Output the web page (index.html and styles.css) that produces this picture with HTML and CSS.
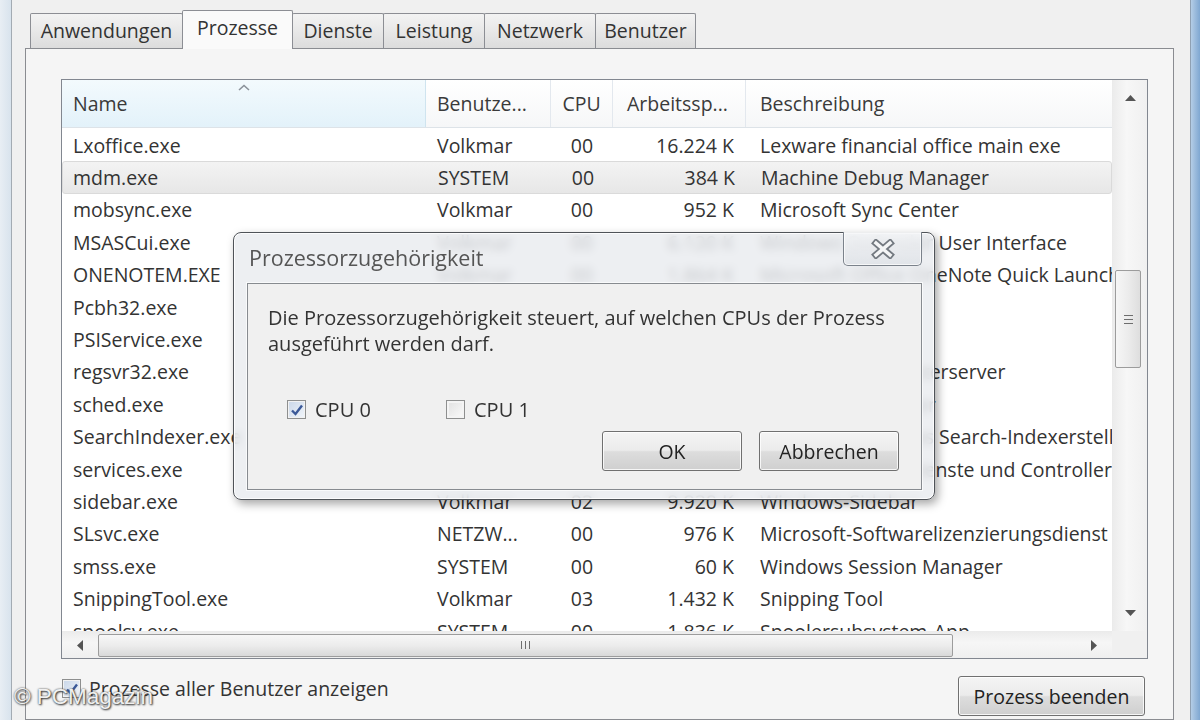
FILE: index.html
```html
<!DOCTYPE html>
<html lang="de">
<head>
    <meta charset="UTF-8">
    <title>Task-Manager - Prozesse</title>
    <link rel="stylesheet" href="styles.css">
</head>
<body>
    <div class="window">
        <div class="frame-left"></div>
        <div class="client">
            <div class="tabs">
                <div class="tab tab-anw">Anwendungen</div>
                <div class="tab tab-proz active">Prozesse</div>
                <div class="tab tab-dien">Dienste</div>
                <div class="tab tab-leis">Leistung</div>
                <div class="tab tab-netz">Netzwerk</div>
                <div class="tab tab-benu">Benutzer</div>
            </div>

            <div class="panel">
                <div class="listview">
                    <div class="table">
                        <div class="header">
                            <div class="hcell sorted">Name
                                <svg class="sort-arrow" width="12" height="7" viewBox="0 0 12 7"><path d="M1 6 L6 1.5 L11 6" fill="none" stroke="#8a9199" stroke-width="1.6"/></svg>
                            </div>
                            <div class="hcell">Benutze...</div>
                            <div class="hcell center">CPU</div>
                            <div class="hcell">Arbeitssp...</div>
                            <div class="hcell desc">Beschreibung</div>
                        </div>
                        <div class="rows">
                            <div class="row"><span>Lxoffice.exe</span><span>Volkmar</span><span class="center">00</span><span class="num">16.224 K</span><span class="desc">Lexware financial office main exe</span></div>
                            <div class="row hot"><span>mdm.exe</span><span>SYSTEM</span><span class="center">00</span><span class="num">384 K</span><span class="desc">Machine Debug Manager</span></div>
                            <div class="row"><span>mobsync.exe</span><span>Volkmar</span><span class="center">00</span><span class="num">952 K</span><span class="desc">Microsoft Sync Center</span></div>
                            <div class="row"><span>MSASCui.exe</span><span>Volkmar</span><span class="center">00</span><span class="num">6.120 K</span><span class="desc">Windows Defender User Interface</span></div>
                            <div class="row"><span>ONENOTEM.EXE</span><span>Volkmar</span><span class="center">00</span><span class="num">1.864 K</span><span class="desc">Microsoft Office OneNote Quick Launcher</span></div>
                            <div class="row"><span>Pcbh32.exe</span><span>Volkmar</span><span class="center">00</span><span class="num">2.404 K</span><span class="desc">Pcbh32 Helper</span></div>
                            <div class="row"><span>PSIService.exe</span><span>SYSTEM</span><span class="center">00</span><span class="num">1.140 K</span><span class="desc">PSIService</span></div>
                            <div class="row"><span>regsvr32.exe</span><span>Volkmar</span><span class="center">00</span><span class="num">1.852 K</span><span class="desc">Microsoft(C) Registerserver</span></div>
                            <div class="row"><span>sched.exe</span><span>SYSTEM</span><span class="center">00</span><span class="num">2.160 K</span><span class="desc">Antivirus Scheduler</span></div>
                            <div class="row"><span>SearchIndexer.exe</span><span>SYSTEM</span><span class="center">00</span><span class="num">11.372 K</span><span class="desc">Microsoft Windows Search-Indexerstellungsprogramm</span></div>
                            <div class="row"><span>services.exe</span><span>SYSTEM</span><span class="center">00</span><span class="num">3.668 K</span><span class="desc">Anwendung für Dienste und Controller</span></div>
                            <div class="row"><span>sidebar.exe</span><span>Volkmar</span><span class="center">02</span><span class="num">9.920 K</span><span class="desc">Windows-Sidebar</span></div>
                            <div class="row"><span>SLsvc.exe</span><span>NETZW...</span><span class="center">00</span><span class="num">976 K</span><span class="desc">Microsoft-Softwarelizenzierungsdienst</span></div>
                            <div class="row"><span>smss.exe</span><span>SYSTEM</span><span class="center">00</span><span class="num">60 K</span><span class="desc">Windows Session Manager</span></div>
                            <div class="row"><span>SnippingTool.exe</span><span>Volkmar</span><span class="center">03</span><span class="num">1.432 K</span><span class="desc">Snipping Tool</span></div>
                            <div class="row"><span>spoolsv.exe</span><span>SYSTEM</span><span class="center">00</span><span class="num">1.836 K</span><span class="desc">Spoolersubsystem-App</span></div>
                        </div>
                    </div>

                    <div class="vscroll">
                        <div class="sbtn"><svg width="11" height="6" viewBox="0 0 11 6"><path d="M0 6 L5.5 0 L11 6 Z" fill="#555"/></svg></div>
                        <div class="vtrack-top"></div>
                        <div class="vthumb"><span class="grip-h"></span><span class="grip-h"></span><span class="grip-h"></span></div>
                        <div class="vtrack-rest"></div>
                        <div class="sbtn"><svg width="11" height="6" viewBox="0 0 11 6"><path d="M0 0 L5.5 6 L11 0 Z" fill="#555"/></svg></div>
                    </div>

                    <div class="hscroll">
                        <div class="sbtn-h"><svg width="6" height="11" viewBox="0 0 6 11"><path d="M6 0 L0 5.5 L6 11 Z" fill="#555"/></svg></div>
                        <div class="hthumb"><span class="grip-v"></span><span class="grip-v"></span><span class="grip-v"></span></div>
                        <div class="htrack-rest"></div>
                        <div class="sbtn-h"><svg width="6" height="11" viewBox="0 0 6 11"><path d="M0 0 L6 5.5 L0 11 Z" fill="#555"/></svg></div>
                    </div>
                    <div class="corner"></div>
                </div>

                <div class="bottom-bar">
                    <label class="check-line">
                        <span class="checkbox checked"><svg width="16" height="16" viewBox="0 0 16 16"><path d="M3 8.5 L6.5 12 L13 3.5" fill="none" stroke="#3b5998" stroke-width="2.4"/></svg></span>
                        Prozesse aller Benutzer anzeigen
                    </label>
                    <button class="win-btn end-btn">Prozess beenden</button>
                </div>
            </div>
        </div>
        <div class="frame-right"></div>
    </div>

    <div class="watermark">© PCMagazin</div>

    <div class="dialog">
        <div class="dialog-title">Prozessorzugehörigkeit</div>
        <div class="close-btn">
            <svg width="26" height="20" viewBox="0 0 26 20">
                <path d="M6 4 L20 16 M20 4 L6 16" stroke="#737980" stroke-width="7" stroke-linecap="square"/>
                <path d="M6 4 L20 16 M20 4 L6 16" stroke="#f4f5f6" stroke-width="3.5" stroke-linecap="square"/>
            </svg>
        </div>
        <div class="dialog-body">
            <p class="dialog-text">Die Prozessorzugehörigkeit steuert, auf welchen CPUs der Prozess<br>ausgeführt werden darf.</p>
            <div class="cpu-row">
                <label class="cpu-item">
                    <span class="checkbox checked"><svg width="16" height="16" viewBox="0 0 16 16"><path d="M3 8.5 L6.5 12 L13 3.5" fill="none" stroke="#3b5998" stroke-width="2.4"/></svg></span>
                    CPU 0
                </label>
                <label class="cpu-item">
                    <span class="checkbox"></span>
                    CPU 1
                </label>
            </div>
            <div class="dialog-buttons">
                <button class="win-btn">OK</button>
                <button class="win-btn">Abbrechen</button>
            </div>
        </div>
    </div>
</body>
</html>
```

FILE: styles.css
```css
* {
    box-sizing: border-box;
}
body {
    margin: 0;
    width: 1200px;
    height: 720px;
    overflow: hidden;
    font-family: "Open Sans", "Noto Sans", sans-serif;
    font-size: 19.5px;
    color: #333;
    background-color: #f0f0f0;
}
.window {
    display: flex;
    height: 720px;
}
.frame-left {
    width: 12px;
    background: linear-gradient(to right, #e8eef4, #d8e3ed);
    border-right: 1px solid #a3abb3;
}
.frame-right {
    width: 10px;
    background: linear-gradient(to right, #b4cde6, #7fa7d1);
    border-left: 1px solid #8fa0b2;
}
.client {
    flex: 1;
    display: flex;
    flex-direction: column;
    padding-left: 13px;
    padding-right: 16px;
    background-color: #f0f0f0;
}

/* tabs */
.tabs {
    display: flex;
    align-items: flex-end;
    height: 48px;
    padding-left: 5px;
}
.tab {
    height: 35px;
    margin-right: -1px;
    border: 1px solid #8c8e94;
    border-bottom: none;
    border-radius: 2px 2px 0 0;
    background: linear-gradient(to bottom, #f3f3f3, #e8e8e8 50%, #dcdcdc);
    text-align: center;
    line-height: 33px;
    color: #333;
}
.tab.active {
    position: relative;
    z-index: 1;
    height: 39px;
    margin-bottom: -1px;
    background: #fafafa;
    line-height: 33px;
}
.tab-anw { width: 153px; }
.tab-proz { width: 111px; }
.tab-dien { width: 92px; }
.tab-leis { width: 102px; }
.tab-netz { width: 112px; }
.tab-benu { width: 101px; }

.panel {
    flex: 1;
    border: 1px solid #8a8c91;
    background-color: #f5f5f5;
    padding: 30px 0 0 35px;
}

/* list view */
.listview {
    width: 1087px;
    height: 580px;
    border: 1px solid #828790;
    background-color: white;
    display: grid;
    grid-template-columns: 1050px 35px;
    grid-template-rows: 551px 27px;
}
.table {
    overflow: hidden;
}
.header {
    display: grid;
    grid-template-columns: 364px 125px 62px 133px 366px;
    height: 48px;
    border-bottom: 1px solid #dde3e8;
}
.hcell {
    position: relative;
    display: flex;
    align-items: center;
    padding-left: 11px;
    border-right: 1px solid #e3e8ee;
    background: linear-gradient(to bottom, #ffffff, #f6f7f8);
    color: #3a3a3a;
    white-space: nowrap;
    overflow: hidden;
}
.hcell:nth-child(4) {
    padding-left: 14px;
}
.hcell.center {
    justify-content: center;
    padding-left: 0;
}
.hcell.desc {
    padding-left: 14px;
    border-right: none;
}
.hcell.sorted {
    background: linear-gradient(to bottom, #f3fafd, #e3f2fa);
    border-right-color: #cfe4ef;
}
.sort-arrow {
    position: absolute;
    top: 4px;
    left: 176px;
}
.rows {
    padding-top: 1px;
}
.row {
    display: grid;
    grid-template-columns: 364px 125px 62px 133px 366px;
    height: 32.4px;
    align-items: center;
    white-space: nowrap;
}
.row span {
    overflow: hidden;
    padding-left: 11px;
}
.row .center {
    text-align: center;
    padding-left: 0;
}
.row .num {
    text-align: right;
    padding-left: 0;
    padding-right: 12px;
}
.row .desc {
    padding-left: 14px;
}
.row.hot {
    background: linear-gradient(to bottom, #f3f3f3, #e7e7e7);
    border: 1px solid #dadada;
    border-radius: 3px;
}
.row.hot span:first-child {
    padding-left: 10px;
}

/* scrollbars */
.vscroll {
    grid-row: 1;
    grid-column: 2;
    display: flex;
    flex-direction: column;
    border-left: 1px solid #ebebeb;
    background: linear-gradient(to right, #ececec, #f7f7f7 40%, #f0f0f0);
}
.sbtn {
    height: 36px;
    display: flex;
    align-items: center;
    justify-content: center;
}
.vtrack-top {
    height: 154px;
}
.vthumb {
    height: 98px;
    margin: 0 6px 0 2px;
    border: 1px solid #9c9c9c;
    border-radius: 2px;
    background: linear-gradient(to right, #f6f6f6, #ececec 50%, #dedede);
    display: flex;
    flex-direction: column;
    align-items: center;
    justify-content: center;
    gap: 3px;
}
.grip-h {
    width: 9px;
    height: 1px;
    background-color: #6d6d6d;
}
.vtrack-rest {
    flex: 1;
}
.hscroll {
    grid-row: 2;
    grid-column: 1;
    display: flex;
    align-items: center;
    border-top: 1px solid #ebebeb;
    background: linear-gradient(to bottom, #ececec, #f6f6f6 40%, #efefef);
}
.sbtn-h {
    width: 36px;
    height: 100%;
    display: flex;
    align-items: center;
    justify-content: center;
}
.hthumb {
    width: 855px;
    height: 23px;
    border: 1px solid #9c9c9c;
    border-radius: 2px;
    background: linear-gradient(to bottom, #f7f7f7, #ececec 50%, #d9d9d9);
    display: flex;
    align-items: center;
    justify-content: center;
    gap: 3px;
}
.grip-v {
    width: 1px;
    height: 8px;
    background-color: #6d6d6d;
}
.htrack-rest {
    flex: 1;
}
.corner {
    grid-row: 2;
    grid-column: 2;
    background-color: #f0f0f0;
}

/* bottom */
.bottom-bar {
    width: 1087px;
    display: flex;
    justify-content: space-between;
    align-items: flex-start;
    margin-top: 17px;
}
.check-line {
    display: flex;
    align-items: center;
    gap: 8px;
    margin-top: -1px;
    padding-left: 1px;
}
.checkbox {
    width: 19px;
    height: 19px;
    border: 1px solid #8e8f8f;
    background: linear-gradient(135deg, #e0e0e0, #fbfbfb);
    box-shadow: inset 0 0 0 2px #f4f4f4;
    display: flex;
    align-items: center;
    justify-content: center;
}
.checkbox.checked {
    background: linear-gradient(135deg, #c9d6e8, #f2f6fb);
    box-shadow: inset 0 0 0 1px #f2f2f2;
}
.win-btn {
    font-family: "Open Sans", "Noto Sans", sans-serif;
    font-size: 19.5px;
    color: #222;
    height: 40px;
    border: 1px solid #707070;
    border-radius: 3px;
    background: linear-gradient(to bottom, #f4f4f4, #ebebeb 48%, #dddddd 52%, #cfcfcf);
    box-shadow: inset 0 0 0 1px rgba(255, 255, 255, 0.8);
    padding: 0;
}
.end-btn {
    width: 187px;
    margin-right: 3px;
}

.watermark {
    position: absolute;
    left: 14px;
    top: 684px;
    font-family: "Liberation Sans", Arial, sans-serif;
    font-size: 22.5px;
    color: rgba(255, 255, 255, 0.92);
    text-shadow: 0 0 2px #444, 1px 1px 2px #333;
}

/* dialog */
.dialog {
    position: absolute;
    left: 233px;
    top: 232px;
    width: 702px;
    height: 268px;
    border: 1px solid #4f5358;
    border-radius: 8px;
    background: rgba(232, 235, 239, 0.8);
    backdrop-filter: blur(4px);
    box-shadow: 3px 4px 10px rgba(0, 0, 0, 0.35), inset 0 0 0 1px rgba(255, 255, 255, 0.85);
    display: flex;
    flex-direction: column;
    padding: 0 12px 9px 13px;
}
.dialog-title {
    height: 50px;
    padding-left: 2px;
    padding-top: 10px;
    font-size: 21.5px;
    color: #555;
}
.close-btn {
    position: absolute;
    top: -1px;
    right: 12px;
    width: 79px;
    height: 34px;
    border: 1px solid #7b828b;
    border-top: none;
    border-radius: 0 0 5px 5px;
    background: linear-gradient(to bottom, rgba(245, 246, 248, 0.7), rgba(220, 224, 229, 0.7));
    box-shadow: inset 0 0 0 1px rgba(255, 255, 255, 0.7);
    display: flex;
    align-items: center;
    justify-content: center;
}
.dialog-body {
    flex: 1;
    background-color: #f0f0f0;
    border: 1px solid #878b90;
    box-shadow: 0 0 0 1px rgba(255, 255, 255, 0.7);
    padding: 21px 22px 0 20px;
    display: flex;
    flex-direction: column;
    font-size: 20px;
}
.dialog-text {
    margin: 0;
    line-height: 26px;
}
.cpu-row {
    display: flex;
    margin-top: 39px;
    padding-left: 19px;
}
.cpu-item {
    display: flex;
    align-items: center;
    gap: 9px;
    width: 159px;
}
.dialog-buttons {
    display: flex;
    justify-content: flex-end;
    gap: 17px;
    margin-top: 8px;
}
.dialog-buttons .win-btn {
    width: 140px;
}
```
